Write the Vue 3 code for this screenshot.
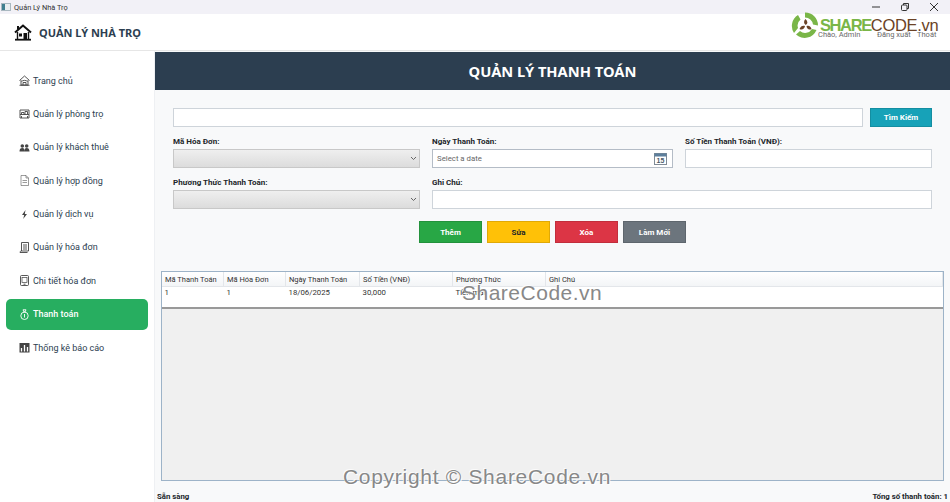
<script setup>
const navItems = [
  { label: 'Trang chủ', icon: 'home' },
  { label: 'Quản lý phòng trọ', icon: 'room' },
  { label: 'Quản lý khách thuê', icon: 'people' },
  { label: 'Quản lý hợp đồng', icon: 'doc' },
  { label: 'Quản lý dịch vụ', icon: 'bolt' },
  { label: 'Quản lý hóa đơn', icon: 'receipt' },
  { label: 'Chi tiết hóa đơn', icon: 'detail' },
  { label: 'Thanh toán', icon: 'money', active: true },
  { label: 'Thống kê báo cáo', icon: 'chart' },
]
const columns = [
  { label: 'Mã Thanh Toán', width: 62, value: '1' },
  { label: 'Mã Hóa Đơn', width: 62, value: '1' },
  { label: 'Ngày Thanh Toán', width: 74, value: '18/06/2025' },
  { label: 'Số Tiền (VNĐ)', width: 93, value: '30,000' },
  { label: 'Phương Thức', width: 93, value: 'Tiền mặt' },
  { label: 'Ghi Chú', width: 397, value: '' },
]
</script>

<template>
  <div class="window">
    <div class="titlebar">
      <div class="title-left">
        <svg class="app-icon" viewBox="0 0 10 8" width="10" height="8">
          <rect width="10" height="8" fill="#a9b8c0" />
          <rect x="1" y="1" width="3" height="6" fill="#3f7f8f" />
          <rect x="4" y="1" width="5" height="6" fill="#e8eef0" />
        </svg>
        <span>Quản Lý Nhà Trọ</span>
      </div>
      <div class="controls">
        <svg width="10" height="10" viewBox="0 0 10 10"><path d="M1 5h8" stroke="#333" /></svg>
        <svg width="10" height="10" viewBox="0 0 10 10" fill="none" stroke="#333"><rect x="1.5" y="3" width="5.5" height="5.5" rx="1" /><path d="M3.5 3V1.5h5v5H7" /></svg>
        <svg width="10" height="10" viewBox="0 0 10 10"><path d="M1 1l8 8M9 1l-8 8" stroke="#333" /></svg>
      </div>
    </div>

    <header class="appbar">
      <div class="brand">
        <svg width="18" height="17" viewBox="0 0 18 17" fill="none" stroke="#111">
          <path d="M1 8.500 9 1.500l8 7" stroke-width="2" />
          <path d="M4 2v3.500" stroke-width="2" />
          <path d="M3.500 8v7M14.500 8v7" stroke-width="1.400" />
          <path d="M1 15.700h16" stroke-width="1.800" />
          <rect x="9.500" y="9" width="3.500" height="6" fill="#111" stroke="none" />
          <rect x="5" y="9.500" width="3" height="3" fill="#111" stroke="none" />
        </svg>
        <span>QUẢN LÝ NHÀ TRỌ</span>
      </div>
      <div class="user-row">
        <span class="user-name">Chào, Admin</span>
        <span class="user-link">Đăng xuất</span>
        <span class="user-link">Thoát</span>
      </div>
      <div class="logo">
        <svg width="29" height="29" viewBox="0 0 29 29">
          <path d="M14 1.500 A12.800 12.800 0 0 1 27 14.500 L22 13.500 A8 8 0 0 0 14 6.500 Z" fill="#7ab648" />
          <path d="M25.500 19 A12.800 12.800 0 0 1 5 23.500 L9 20 A8 8 0 0 0 21 18 Z" fill="#7ab648" />
          <path d="M3 22 A12.800 12.800 0 0 1 7 4 L9.500 8.500 A8 8 0 0 0 7 17 Z" fill="#7ab648" />
          <path d="M14.500 8 C17 10.500 17 12.500 14.800 14 C12.500 12.500 12.500 10 14.500 8Z M8.500 18 C9.500 15 12 14 14 15 C13.500 18 11 19.500 8.500 18Z M20.500 18 C18 19.500 15.800 18 15.500 15 C18 14 20 15.500 20.500 18Z" fill="#6b4326" />
        </svg>
        <span class="logo-share">SHARE</span><span class="logo-code">CODE.vn</span>
      </div>
    </header>

    <div class="body">
      <nav class="sidebar">
        <div v-for="item in navItems" :key="item.label" class="nav-item" :class="{ active: item.active }">
          <svg class="nav-icon" width="11" height="11" viewBox="0 0 11 11" fill="none" stroke="currentColor" stroke-width=".9">
            <template v-if="item.icon === 'home'">
              <path d="M.5 5.500 5.500 1l5 4.500M2 5v5h7V5M.5 10.300h10M4 10V7.500h3V10M2.500 6.500c1.500-1.500 4.500-1.500 6 0" />
            </template>
            <template v-else-if="item.icon === 'room'">
              <path d="M1 2h9v8H1zM1 6.500h9M2.500 6.500V4.500h2.500v2M6 6.500V3.500h2.500v3M2.500 10v-2M8.500 10v-2" />
            </template>
            <template v-else-if="item.icon === 'people'">
              <circle cx="3.300" cy="4" r="1.800" fill="currentColor" stroke="none" />
              <circle cx="7.700" cy="4" r="1.800" fill="currentColor" stroke="none" />
              <path d="M.5 9.500C.5 7 1.500 6 3.300 6S5.500 7 5.500 9.500zM5.500 9.500C5.500 7 6 6 7.700 6s2.800 1 2.800 3.500z" fill="currentColor" stroke="none" />
            </template>
            <template v-else-if="item.icon === 'doc'">
              <path d="M2 .5h5l2.500 2.500v7.500H2zM7 .5V3h2.500M3.500 5.500h4.500M3.500 7.500h4.500" stroke-width=".7" opacity=".75" />
            </template>
            <template v-else-if="item.icon === 'bolt'">
              <path d="M6.500 1 3 6h2.200l-1 4L8 5H5.800z" fill="currentColor" stroke="none" />
            </template>
            <template v-else-if="item.icon === 'receipt'">
              <path d="M2.500.5h7v8.500h-7zM1 10.500h7.500M1 10.500c0-1 .5-1.500 1.500-1.500M4 3h4M4 5h4M4 7h4" />
            </template>
            <template v-else-if="item.icon === 'detail'">
              <rect x="1.500" y=".5" width="8" height="10" rx="1" />
              <rect x="3" y="2.500" width="5" height="5" stroke-width=".7" />
              <path d="M4.500 9.200h2" />
            </template>
            <template v-else-if="item.icon === 'money'">
              <circle cx="5.500" cy="6.800" r="3.700" />
              <path d="M4 .8h3L6 3H5zM5.500 5v3.500" />
            </template>
            <template v-else>
              <rect x=".5" y="1" width="10" height="9.500" fill="currentColor" stroke="none" />
              <path d="M2.500 9.500V6M5.500 9.500V3M8.500 9.500V5" stroke="#fff" stroke-width="1.300" />
            </template>
          </svg>
          <span>{{ item.label }}</span>
        </div>
      </nav>

      <main class="content">
        <div class="banner">QUẢN LÝ THANH TOÁN</div>

        <section class="form-area">
          <div class="search-row">
            <div class="field grow"></div>
            <button class="btn search-btn">Tìm Kiếm</button>
          </div>

          <div class="form-grid">
            <div class="group">
              <label>Mã Hóa Đơn:</label>
              <div class="field select">
                <svg width="7" height="5" viewBox="0 0 7 5" fill="none"><path d="M1 1l2.500 2.500L6 1" stroke="#666" /></svg>
              </div>
            </div>
            <div class="group">
              <label>Ngày Thanh Toán:</label>
              <div class="field date">
                <span>Select a date</span>
                <svg width="13" height="12" viewBox="0 0 13 12">
                  <rect x=".5" y=".5" width="12" height="11" fill="#fff" stroke="#7f8a95" />
                  <rect x=".5" y=".5" width="12" height="3" fill="#5d7f9c" />
                  <text x="6.500" y="10" text-anchor="middle" class="cal-num">15</text>
                </svg>
              </div>
            </div>
            <div class="group">
              <label>Số Tiền Thanh Toán (VNĐ):</label>
              <div class="field"></div>
            </div>
            <div class="group">
              <label>Phương Thức Thanh Toán:</label>
              <div class="field select">
                <svg width="7" height="5" viewBox="0 0 7 5" fill="none"><path d="M1 1l2.500 2.500L6 1" stroke="#666" /></svg>
              </div>
            </div>
            <div class="group span-2">
              <label>Ghi Chú:</label>
              <div class="field"></div>
            </div>
          </div>

          <div class="actions">
            <button class="btn green">Thêm</button>
            <button class="btn yellow">Sửa</button>
            <button class="btn red">Xóa</button>
            <button class="btn gray">Làm Mới</button>
          </div>
        </section>

        <section class="table-wrap">
          <div class="table-head">
            <div v-for="c in columns" :key="c.label" class="th" :style="{ width: c.width + 'px' }">{{ c.label }}</div>
          </div>
          <div class="table-row">
            <div v-for="c in columns" :key="c.label" class="td" :style="{ width: c.width + 'px' }">{{ c.value }}</div>
          </div>
          <div class="table-empty"></div>
          <div class="wm wm-table">ShareCode.vn</div>
        </section>

        <footer class="status">
          <span>Sẵn sàng</span>
          <span>Tổng số thanh toán: 1</span>
        </footer>
        <div class="wm wm-copy">Copyright © ShareCode.vn</div>
      </main>
    </div>
  </div>
</template>

<style scoped>
.window {
  width: 950px;
  height: 502px;
  display: flex;
  flex-direction: column;
  overflow: hidden;
  background: #fff;
  font-family: Roboto, "Noto Sans", sans-serif;
  color: #212529;
}
.titlebar {
  height: 14px;
  flex: none;
  background: #f2f1f7;
  display: flex;
  justify-content: space-between;
  align-items: center;
  font-size: 7.400px;
  color: #333;
}
.title-left {
  display: flex;
  align-items: center;
  gap: 3px;
  padding-left: 1px;
}
.controls {
  display: flex;
  gap: 19px;
  padding-right: 11px;
}
.appbar {
  height: 37px;
  flex: none;
  background: #fff;
  border-bottom: 1px solid #e6e6e6;
  box-sizing: border-box;
  position: relative;
  display: flex;
  align-items: center;
  padding-left: 14px;
}
.brand {
  display: flex;
  align-items: center;
  gap: 7px;
  font-family: "Noto Sans", sans-serif;
  font-size: 11px;
  font-weight: 700;
  color: #2c3e50;
}
.user-row {
  position: absolute;
  top: 17px;
  left: 818px;
  font-size: 7.500px;
  line-height: 1;
  color: #6a6a6a;
  display: flex;
  gap: 2px;
}
.user-name { width: 57px; }
.user-link:nth-child(2) { width: 38px; }
.logo {
  position: absolute;
  left: 791px;
  top: -3px;
  display: flex;
  align-items: center;
  height: 29px;
  line-height: 1;
}
.logo-share {
  font-family: "Liberation Sans", sans-serif;
  font-size: 16.500px;
  font-weight: 700;
  letter-spacing: -1.400px;
  color: #7ab648;
}
.logo-code {
  font-family: "Liberation Sans", sans-serif;
  font-size: 16.500px;
  color: #6b4326;
  letter-spacing: -.3px;
}
.body {
  flex: 1;
  display: flex;
  min-height: 0;
}
.sidebar {
  width: 155px;
  flex: none;
  box-sizing: border-box;
  padding: 14px 6px 0 6px;
  background: #fff;
  border-right: 1px solid #eef0f3;
  display: flex;
  flex-direction: column;
  gap: 2.400px;
}
.nav-item {
  height: 31px;
  flex: none;
  display: flex;
  align-items: center;
  gap: 3px;
  padding-left: 13px;
  border-radius: 5px;
  font-size: 9px;
  color: #2c3e50;
}
.nav-icon { color: #444; flex: none; }
.nav-item.active {
  background: #27ae60;
  color: #fff;
  font-weight: 500;
}
.nav-item.active .nav-icon { color: #fff; }
.content {
  flex: 1;
  min-width: 0;
  background: #f8f9fa;
  display: flex;
  flex-direction: column;
  position: relative;
}
.banner {
  height: 38px;
  flex: none;
  margin-top: 1px;
  background: #2c3e50;
  color: #fff;
  display: flex;
  align-items: center;
  justify-content: center;
  font-family: "Noto Sans", sans-serif;
  font-size: 14.700px;
  font-weight: 700;
  box-sizing: border-box;
}
.form-area {
  padding: 18px 18px 0;
  flex: none;
}
.search-row {
  display: flex;
  gap: 7px;
  height: 19px;
}
.grow { flex: 1; }
.field {
  height: 19px;
  box-sizing: border-box;
  background: #fff;
  border: 1px solid #ced4da;
}
.btn {
  border: 1px solid rgba(0, 0, 0, .12);
  padding: 0;
  font-family: inherit;
  font-size: 8px;
  font-weight: 700;
  color: #fff;
  cursor: pointer;
}
.search-btn {
  width: 62px;
  height: 19px;
  background: #17a2b8;
}
.form-grid {
  display: grid;
  grid-template-columns: 247px 241px 247px;
  column-gap: 12px;
  row-gap: 8px;
  margin-top: 8px;
}
.group {
  display: flex;
  flex-direction: column;
}
.span-2 { grid-column: span 2; }
.group label {
  height: 14px;
  font-size: 8px;
  font-weight: 700;
  line-height: 14px;
  color: #212529;
}
.select {
  background: linear-gradient(#efefef, #dcdcdc);
  border-color: #c8c8c8;
  display: flex;
  align-items: center;
  justify-content: flex-end;
  padding-right: 2px;
}
.date {
  display: flex;
  align-items: center;
  justify-content: space-between;
  padding: 0 5px 0 4px;
  border-color: #b4bcc6;
  font-size: 7.800px;
  color: #666;
}
.cal-num {
  font-size: 7px;
  font-weight: 700;
  fill: #4a5a68;
  font-family: "Liberation Sans", sans-serif;
}
.actions {
  display: flex;
  justify-content: center;
  gap: 5.500px;
  margin-top: 12px;
}
.actions .btn {
  width: 62.500px;
  height: 22px;
}
.green { background: #28a745; }
.yellow { background: #ffc107; color: #212529; }
.red { background: #dc3545; }
.gray { background: #6c757d; }
.table-wrap {
  position: relative;
  margin: 28px 6px 0;
  height: 210px;
  flex: none;
  box-sizing: border-box;
  border: 1px solid #9db3c8;
  background: #f0f0f0;
  display: flex;
  flex-direction: column;
}
.table-head {
  display: flex;
  height: 15px;
  flex: none;
  background: linear-gradient(#fff, #f3f5f7);
  border-bottom: 1px solid #e3e6ea;
  box-sizing: border-box;
}
.th {
  box-sizing: border-box;
  border-right: 1px solid #e3e6ea;
  padding-left: 3px;
  font-size: 7.500px;
  line-height: 15px;
  color: #333;
  white-space: nowrap;
  overflow: hidden;
  flex: none;
}
.table-row {
  display: flex;
  height: 22px;
  flex: none;
  background: #fff;
  border-bottom: 2px solid #999;
  box-sizing: border-box;
}
.td {
  box-sizing: border-box;
  padding-left: 2.500px;
  font-size: 7.800px;
  line-height: 12px;
  color: #333;
  flex: none;
}
.table-empty { flex: 1; }
.status {
  flex: 1;
  display: flex;
  align-items: center;
  justify-content: space-between;
  padding: 9px 2px 0;
  font-size: 7.800px;
  font-weight: 700;
  color: #212529;
}
.wm {
  position: absolute;
  font-family: "Liberation Sans", sans-serif;
  color: #888;
  white-space: nowrap;
  text-shadow: 1px 1px 0 #fff, -1px -1px 0 rgba(255, 255, 255, .8);
  pointer-events: none;
  line-height: 1;
}
.wm-table {
  left: 300px;
  top: 10px;
  font-size: 21px;
  letter-spacing: .5px;
}
.wm-copy {
  left: 188px;
  top: 415px;
  font-size: 21px;
  letter-spacing: .7px;
}
</style>
<style>
html, body { margin: 0; padding: 0; overflow: hidden; }
</style>
